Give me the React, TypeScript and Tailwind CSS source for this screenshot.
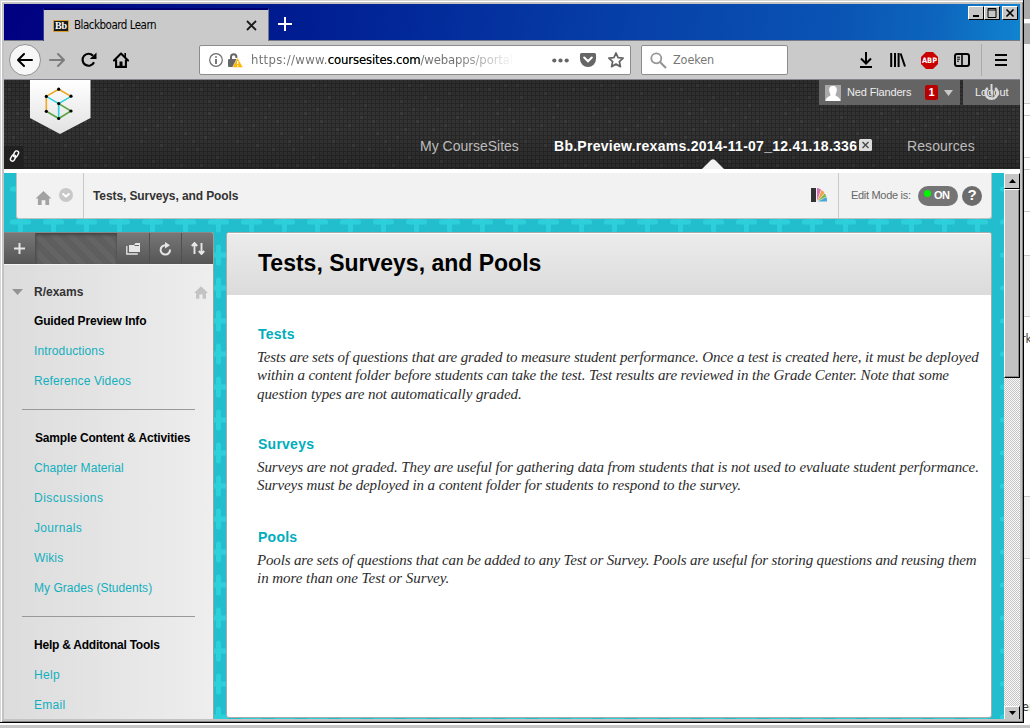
import type { ReactNode } from "react";

const GRID_SPOTS = [
  [4, 8], [20, 4], [36, 16], [48, 28], [12, 32], [28, 40], [56, 44], [8, 56], [40, 60], [60, 12],
  [72, 24], [84, 52], [76, 68], [20, 76], [52, 80], [88, 8], [64, 88], [32, 92], [44, 48], [0, 68],
  [12, 20], [24, 28], [32, 4], [68, 36], [80, 40], [16, 48], [92, 60], [60, 64], [4, 84], [80, 84],
];

function Caption({ className, children }: { className: string; children: ReactNode }) {
  return <span className={"block whitespace-nowrap " + className}>{children}</span>;
}

function HomeGlyph({ className }: { className: string }) {
  return (
    <svg viewBox="0 0 17 15" className={className} fill="currentColor">
      <path d="M8.5 0 17 8h-2.5v7h-4v-5h-4v5h-4V8H0z" />
    </svg>
  );
}

function WinButton({ className, children }: { className: string; children: ReactNode }) {
  return (
    <div className={"flex h-[14px] w-4 items-center justify-center border border-t-white border-l-white border-r-black border-b-black bg-[#c6c6c6] " + className}>
      <svg width="12" height="10" viewBox="0 0 12 10" stroke="#000" fill="none">{children}</svg>
    </div>
  );
}

function TitleBar() {
  return (
    <div className="flex h-[37px] shrink-0 border-b border-[#777b88] bg-[linear-gradient(97deg,#000080_0%,#001c90_28%,#063ca6_58%,#0a54b4_82%,#0d66bd_92%,#1084d0_100%)]">
      <div className="ml-[39px] mt-1 flex h-[33px] w-[226px] items-center border-t-2 border-r border-l border-t-[#000070] border-r-[#777b88] border-l-[#39399a] bg-[#cacaca] pl-[9px]">
        <div className="flex h-3 w-4 items-center justify-center rounded-[1px] border border-[#d99e2b] bg-[#1b1b1b] font-['Liberation_Serif',serif] text-[10px] leading-none font-bold text-white">Bb</div>
        <Caption className="ml-[5px] w-[170px] font-['DejaVu_Sans_Condensed','DejaVu_Sans',sans-serif] text-[11.5px] tracking-[-0.5px] text-black">Blackboard Learn</Caption>
        <svg width="11" height="11" viewBox="0 0 11 11" className="ml-[2px] shrink-0" stroke="#1a1a1a" strokeWidth="1.8"><path d="M1 1l9 9M10 1l-9 9" /></svg>
      </div>
      <svg width="14" height="14" viewBox="0 0 14 14" className="mt-[13px] ml-[9px]" stroke="#fff" strokeWidth="2"><path d="M7 0v14M0 7h14" /></svg>
      <div className="mt-[2px] mr-[2px] ml-auto flex">
        <WinButton className=""><path d="M3 8h6" strokeWidth="2" /></WinButton>
        <WinButton className=""><path d="M2 .5h8v9h-8zM2 2h8" /></WinButton>
        <WinButton className="ml-[2px]"><path d="M2.5 1.5l7 7M9.5 1.5l-7 7" strokeWidth="1.6" /></WinButton>
      </div>
    </div>
  );
}

function Toolbar() {
  return (
    <div className="flex h-[39px] shrink-0 items-center border-b border-[#82848c] bg-[#cacaca]">
      <div className="ml-[5px] flex size-8 shrink-0 items-center justify-center rounded-full border border-[#929292] bg-[#f7f7f7]">
        <svg width="16" height="14" viewBox="0 0 16 14" fill="none" stroke="#000" strokeWidth="2" strokeLinecap="round" strokeLinejoin="round"><path d="M15 7H1M7 1 1 7l6 6" /></svg>
      </div>
      <svg width="16" height="14" viewBox="0 0 16 14" className="ml-2 shrink-0" fill="none" stroke="#7d7d7d" strokeWidth="2" strokeLinecap="round" strokeLinejoin="round"><path d="M1 7h14M9 1l6 6-6 6" /></svg>
      <svg width="16" height="16" viewBox="0 0 16 16" className="ml-4 shrink-0"><path d="M13 10.3A6 6 0 1 1 12 3.7" fill="none" stroke="#000" strokeWidth="2.2" /><path d="M15.5.5v6.6H8.8z" /></svg>
      <svg width="16" height="16" viewBox="0 0 16 16" className="ml-4 shrink-0" fill="none" stroke="#000"><path d="M1 8.5 8 1.5l7 7" strokeWidth="2.1" strokeLinecap="round" strokeLinejoin="round" /><path d="M3.1 7.5v7.4h9.8V7.5" strokeWidth="2.1" /><path d="M8 9.5V15" strokeWidth="3" /><path d="M12.2 1v4" strokeWidth="1.6" /></svg>
      <div className="ml-[70px] flex h-[30px] w-[432px] shrink-0 items-center rounded-[2px] border border-[#8c8c8c] bg-white">
        <svg width="14" height="14" viewBox="0 0 14 14" className="ml-[9px] shrink-0" fill="none" stroke="#6b6b6b"><circle cx="7" cy="7" r="6.3" strokeWidth="1.2" /><path d="M7 6v5M7 3.2v1.6" strokeWidth="1.8" /></svg>
        <svg width="15" height="15" viewBox="0 0 15 15" className="ml-[5px] shrink-0"><path d="M3 7V4a2.700 2.700 0 0 1 5.400 0v1" fill="none" stroke="#666" strokeWidth="2" /><rect x="0" y="6" width="9" height="8" rx="1" fill="#666" /><path d="M9.5 4.5 15 14.5H4.5z" fill="#ffb400" stroke="#fff" strokeWidth=".5" /><path d="M9.7 8v3M9.7 12v1.4" stroke="#fff" strokeWidth="1.3" /></svg>
        <div className="ml-2 w-[266px] overflow-hidden bg-[linear-gradient(90deg,#6f6f6f_205px,#fff_264px)] bg-clip-text font-['DejaVu_Sans_Condensed','DejaVu_Sans',sans-serif] text-[13px] tracking-[-0.15px] whitespace-nowrap text-transparent"><span className="tracking-[0.3px]">https://www.</span><span className="tracking-[-0.15px] text-black">coursesites.com</span>/webapps/portal/</div>
        <svg width="17" height="5" viewBox="0 0 17 5" className="ml-[35px] shrink-0" fill="#666"><circle cx="2.3" cy="2.5" r="2.1" /><circle cx="8.5" cy="2.5" r="2.1" /><circle cx="14.7" cy="2.5" r="2.1" /></svg>
        <svg width="16" height="14" viewBox="0 0 16 14" className="ml-[11px] shrink-0"><path d="M1.5 0h13A1.5 1.5 0 0 1 16 1.5V6a8 8 0 0 1-16 0V1.5A1.5 1.5 0 0 1 1.5 0z" fill="#666" /><path d="m4.2 4.5 3.8 3.7 3.8-3.7" fill="none" stroke="#fff" strokeWidth="2.1" strokeLinecap="round" /></svg>
        <svg width="16" height="16" viewBox="0 0 16 16" className="ml-3 shrink-0" fill="none" stroke="#666" strokeWidth="1.8" strokeLinejoin="round"><path d="m8 1 2.1 4.6 5 .6-3.7 3.4 1 5L8 12.1l-4.4 2.5 1-5L.9 6.2l5-.6z" /></svg>
      </div>
      <div className="ml-[10px] flex h-[30px] w-[147px] shrink-0 items-center rounded-[2px] border border-[#8c8c8c] bg-white">
        <svg width="17" height="17" viewBox="0 0 17 17" className="ml-2 shrink-0" fill="none" stroke="#969696"><circle cx="6.3" cy="6.3" r="5" strokeWidth="1.8" /><path d="m10 10 6 6" strokeWidth="2.2" /></svg>
        <Caption className="ml-[6px] font-['DejaVu_Sans_Condensed','DejaVu_Sans',sans-serif] text-[12.5px] tracking-[-0.1px] text-[#777]">Zoeken</Caption>
      </div>
      <svg width="14" height="16" viewBox="0 0 14 16" className="ml-[71px] shrink-0" fill="none" stroke="#000" strokeWidth="2"><path d="M7 0v11M2 6.5l5 5 5-5M1 15h12" /></svg>
      <svg width="16" height="14" viewBox="0 0 16 14" className="ml-[17px] shrink-0" stroke="#000" strokeWidth="2"><path d="M1.2 0v14M5 0v14M8.6 0v14M10.6.5l4.4 13" /></svg>
      <svg width="17" height="17" viewBox="0 0 17 17" className="ml-[15px] shrink-0"><path d="M5 0h7l5 5v7l-5 5H5l-5-5V5z" fill="#cb0000" /><text x="8.5" y="11.3" textAnchor="middle" fill="#fff" fontFamily="DejaVu Sans Condensed" fontWeight="bold" fontSize="7.4">ABP</text></svg>
      <svg width="16" height="14" viewBox="0 0 16 14" className="ml-4 shrink-0" fill="none" stroke="#000"><rect x="1" y="1" width="14" height="12" rx="2" strokeWidth="2" /><path d="M8 1v12" strokeWidth="1.6" /><path d="M3 4.2h3M3 6.2h3M3 8.2h2" strokeWidth="1" /></svg>
      <div className="ml-[11px] h-8 w-px shrink-0 bg-[#aaa]" />
      <svg width="12" height="12" viewBox="0 0 12 12" className="ml-[13px] shrink-0" stroke="#000" strokeWidth="2"><path d="M0 1h12M0 6h12M0 11h12" /></svg>
    </div>
  );
}

function CourseHeader() {
  return (
    <header className="relative h-[89px] shrink-0 overflow-hidden bg-[#333] font-['Liberation_Sans',sans-serif]">
      <svg className="absolute inset-0 size-full">
        <defs>
          <pattern id="cells" width="4" height="4" patternUnits="userSpaceOnUse"><path d="M0 3.5h4M3.5 0v4" stroke="#272727" /></pattern>
          <pattern id="spots" width="96" height="96" patternUnits="userSpaceOnUse">
            {GRID_SPOTS.map(([x, y]) => <rect key={x + "-" + y} x={x} y={y} width="3" height="3" fill="#3b3b3b" />)}
          </pattern>
          <linearGradient id="shade" x2="0" y2="1"><stop offset="0" stopOpacity="0.12" /><stop offset=".4" stopOpacity="0" /><stop offset=".6" stopOpacity="0" /><stop offset="1" stopOpacity=".18" /></linearGradient>
        </defs>
        <rect width="100%" height="100%" fill="url(#spots)" />
        <rect width="100%" height="100%" fill="url(#cells)" />
        <rect width="100%" height="100%" fill="url(#shade)" />
      </svg>
      <svg width="62" height="56" viewBox="0 0 62 56" className="absolute top-0 left-[26px]">
        <defs><linearGradient id="badge" x2="0" y2="1"><stop stopColor="#fff" /><stop offset="1" stopColor="#e2e2e2" /></linearGradient></defs>
        <path d="M0 0h60.500v38L30 54 0 38z" fill="url(#badge)" />
        <g fill="none" strokeWidth="1.6">
          <path d="M16.300 31V16.400L28.700 9.200 41 16.400" stroke="#f0a820" /><path d="M16.300 16.400l12.400 7.200L41 16.400M28.700 23.600v15" stroke="#2bd0dc" /><path d="M16.300 31.300l12.400 7.200L41 31l-12.300-7.400" stroke="#5aa340" />
        </g>
        {[[28.7, 9.2], [41, 16.2], [16.3, 16.4], [28.7, 23.6], [16.3, 31.3], [41, 31], [28.7, 38.5]].map(([x, y]) => <circle key={x + "-" + y} cx={x} cy={y} r="1.6" fill="#000" />)}
      </svg>
      <div className="absolute bottom-0 left-0 flex h-[23px] w-[19px] items-center justify-center bg-[#202020]">
        <svg width="11" height="12" viewBox="0 0 11 12" className="mb-[4px] ml-px" fill="none" stroke="#fff" strokeWidth="1.400"><rect x="5" y=".8" width="4" height="6.500" rx="2" transform="rotate(30 7 4)" /><rect x="2.100" y="4.800" width="4" height="6.500" rx="2" transform="rotate(30 4.100 8)" /></svg>
      </div>
      <div className="relative flex h-[25px] justify-end gap-[3px] text-[11px] text-[#ededed]">
        <div className="flex w-[141px] items-center bg-[#646464]">
          <svg width="16" height="16" viewBox="0 0 16 16" className="ml-[6px]"><rect width="16" height="16" fill="#aaa" /><path d="M8 1c3 0 4 2 3.800 4.500C11.500 8 10.500 9 10.500 10c0 1.500 4.500 1.500 5 6H.5c.5-4.500 5-4.500 5-6 0-1-1-2-1.300-4.500C4 3 5 1 8 1z" fill="#fff" /></svg>
          <Caption className="ml-[6px] w-[78px] tracking-[-0.15px]">Ned Flanders</Caption>
          <span className="flex h-[15px] w-[13px] items-center justify-center rounded-[2px] bg-[#b90000] font-bold text-white">1</span>
          <svg width="9" height="6" viewBox="0 0 9 6" className="ml-[6px]" fill="#c8c8c8"><path d="M0 0h9L4.500 6z" /></svg>
        </div>
        <div className="relative w-[57px] bg-[#646464]">
          <Caption className="pl-3 leading-[25px]">Logout</Caption>
          <svg width="17" height="17" viewBox="0 0 17 17" className="absolute top-[4px] left-[20px]" fill="none" stroke="#d8d8d8" strokeWidth="2.600"><path d="M4.800 4a6 6 0 1 0 7.400 0" /><path d="M8.500 0v10" strokeWidth="2" /></svg>
        </div>
      </div>
      <nav className="relative mt-8 flex h-[18px] items-center text-sm text-[#bcbcbc]">
        <Caption className="ml-[416px] w-[134px]">My CourseSites</Caption>
        <Caption className="w-[305px] font-bold tracking-[0.27px] text-white">Bb.Preview.rexams.2014-11-07_12.41.18.336</Caption>
        <svg width="13" height="12" viewBox="0 0 13 12" className="mb-[2px]"><rect width="13" height="12" rx="1.500" fill="#ddd" /><path d="m3.500 3 6 6m0-6-6 6" stroke="#444" strokeWidth="1.300" /></svg>
        <Caption className="ml-[35px] tracking-[0.1px]">Resources</Caption>
      </nav>
      <svg width="22" height="10" viewBox="0 0 22 10" className="absolute bottom-0 left-[698px]" fill="#f2f2f2"><path d="M0 10 9 1q2-1.500 4 0l9 9z" /></svg>
    </header>
  );
}

function Breadcrumb() {
  return (
    <div className="ml-3 flex h-[46px] w-[976px] shrink-0 items-center rounded-b-[3px] border-x border-b border-[#bdc2c3] bg-[#f2f2f2] font-['Liberation_Sans',sans-serif]">
      <HomeGlyph className="mt-[5px] ml-[18px] h-[14px] w-[17px] shrink-0 text-[#a2a2a2]" />
      <svg width="14" height="14" viewBox="0 0 14 14" className="mb-px ml-[7px] shrink-0"><circle cx="7" cy="7" r="7" fill="#c8c8c8" /><path d="m3.500 5.500 3.500 3 3.500-3" stroke="#fff" strokeWidth="2" fill="none" /></svg>
      <div className="ml-[10px] h-full w-px bg-[#c9c9c9]" />
      <Caption className="ml-[9px] w-[718px] text-xs font-bold tracking-[-0.1px] text-[#333]">Tests, Surveys, and Pools</Caption>
      <svg width="16" height="14" viewBox="0 0 16 14" className="mb-[2px] shrink-0"><path d="M0 0h5v14H0z" fill="#333" /><path d="M6 13V0q2.500.2 4 1.500z" fill="#d870b4" /><path d="m6.500 13 4-11q2.200 1 3 3z" fill="#f0a24a" /><path d="m7 13 6.800-7.500q1.200 1.500 1.500 3z" fill="#7ab648" /><path d="M7 13.500 15.500 9q.5 2 .5 4.500z" fill="#46a7d6" /></svg>
      <div className="ml-[11px] h-full w-px bg-[#c9c9c9]" />
      <Caption className="ml-[12px] w-[67px] text-[11px] tracking-[-0.3px] text-[#666]">Edit Mode is:</Caption>
      <div className="flex h-5 w-10 shrink-0 items-center rounded-full bg-[#747474] pl-[6px]">
        <span className="mb-[5px] size-[7px] rounded-full bg-[#00f500]" />
        <span className="ml-[3px] text-[11px] font-bold tracking-[-0.5px] text-white">ON</span>
      </div>
      <div className="ml-1 flex size-5 shrink-0 items-center justify-center rounded-full bg-[#6c6c6c] text-[15px] font-bold text-white">?</div>
    </div>
  );
}

function MenuItem({ children, className = "tracking-[0.12px]" }: { children: ReactNode; className?: string }) {
  return <a className={"block h-[30px] pl-[30px] leading-[30px] whitespace-nowrap text-[#12afbe] " + className}>{children}</a>;
}

function MenuHeading({ children, className = "" }: { children: ReactNode; className?: string }) {
  return <h3 className={"h-[30px] pl-[30px] leading-[30px] font-bold whitespace-nowrap text-black " + className}>{children}</h3>;
}

function Sidebar() {
  return (
    <aside className="flex w-[210px] shrink-0 flex-col overflow-hidden rounded-tr-[3px] border-r border-[#9a9fa0] bg-[linear-gradient(90deg,#dcdcdc,#eee)] font-['Liberation_Sans',sans-serif] text-xs">
      <div className="flex h-[33px] shrink-0 border-t border-b border-t-[#888] border-b-[#f5f5f5] bg-[linear-gradient(#777,#555)]">
        <div className="flex w-8 items-center justify-center border-r border-[#505050]"><svg width="11" height="11" viewBox="0 0 11 11" stroke="#e6e6e6" strokeWidth="2"><path d="M5.500 0v11M0 5.500h11" /></svg></div>
        <div className="w-[81px] bg-[repeating-linear-gradient(45deg,#5e5e5e_0_6px,#646464_6px_12px)] shadow-[inset_0_2px_3px_#444]" />
        <div className="flex w-8 items-center justify-center"><svg width="15" height="13" viewBox="0 0 15 13"><path d="M3 3h5l1.500-2H14v9H3z" fill="#e6e6e6" /><path d="M8.500 3.500H13" stroke="#666" /><path d="M.8 4v8h11" fill="none" stroke="#e6e6e6" strokeWidth="1.300" /></svg></div>
        <div className="flex w-8 items-center justify-center border-l border-[#505050]"><svg width="13" height="14" viewBox="0 0 13 14"><path d="M11 7.500A4.700 4.700 0 1 1 6.500 3.200" fill="none" stroke="#e6e6e6" strokeWidth="2" /><path d="M6 0l5 3.200-5 3.300z" fill="#e6e6e6" /></svg></div>
        <div className="flex w-8 items-center justify-center border-l border-[#505050]"><svg width="14" height="13" viewBox="0 0 14 13" fill="none" stroke="#e6e6e6" strokeWidth="1.900"><path d="M3.500 12V1M.8 4l2.700-3 2.700 3M10.500 1v11M7.800 9l2.700 3 2.700-3" /></svg></div>
      </div>
      <div className="mt-[12px] flex h-[30px] shrink-0 items-center">
        <svg width="12" height="6" viewBox="0 0 12 6" className="ml-[8px]" fill="#949494"><path d="M0 0h11L5.500 6z" /></svg>
        <Caption className="ml-[10px] w-[160px] font-bold text-[#333]">R/exams</Caption>
        <HomeGlyph className="h-[13px] w-[14px] text-[#c3c3c3]" />
      </div>
      <MenuHeading className="-mt-px tracking-[-0.16px]">Guided Preview Info</MenuHeading>
      <MenuItem>Introductions</MenuItem>
      <MenuItem>Reference Videos</MenuItem>
      <div className="mt-[13px] mb-[13px] ml-[18px] h-px w-[173px] shrink-0 bg-[#999]" />
      <MenuHeading className="ml-px tracking-[-0.16px]">Sample Content &amp; Activities</MenuHeading>
      <MenuItem className="tracking-[0.07px]">Chapter Material</MenuItem>
      <MenuItem className="tracking-[0.5px]">Discussions</MenuItem>
      <MenuItem className="tracking-[0.33px]">Journals</MenuItem>
      <MenuItem>Wikis</MenuItem>
      <MenuItem className="tracking-[0.04px]">My Grades (Students)</MenuItem>
      <div className="mt-[13px] mb-[13px] ml-[18px] h-px w-[173px] shrink-0 bg-[#999]" />
      <MenuHeading className="tracking-[-0.23px]">Help &amp; Additonal Tools</MenuHeading>
      <MenuItem className="tracking-[0.3px]">Help</MenuItem>
      <MenuItem className="tracking-[0.3px]">Email</MenuItem>
    </aside>
  );
}

function Section({ title, className, children }: { title: string; className: string; children: ReactNode }) {
  return (
    <section className={className}>
      <h2 className="ml-px font-['Liberation_Sans',sans-serif] text-sm leading-5 font-bold tracking-[0.25px] text-[#00adbc]">{title}</h2>
      <div className="mt-1 font-[Georgia,'Liberation_Serif',serif] text-[15px] leading-[18.400px] whitespace-nowrap text-[#2c2c2c] italic">{children}</div>
    </section>
  );
}

function MainPanel() {
  return (
    <main className="ml-[12px] h-[486px] w-[766px] shrink-0 overflow-hidden rounded-[3px] border border-[#a5abac] bg-white">
      <div className="flex h-[62px] items-center border-t border-white bg-[linear-gradient(#ececec,#dbdbdb)]">
        <h1 className="mb-[3px] ml-[31px] font-['Liberation_Sans',sans-serif] text-[23px] font-bold whitespace-nowrap text-black">Tests, Surveys, and Pools</h1>
      </div>
      <div className="pt-[29px] pl-[30px]">
        <Section title="Tests" className="h-[110px]">
          <p className="tracking-[-0.137px]">Tests are sets of questions that are graded to measure student performance. Once a test is created here, it must be deployed</p>
          <p className="tracking-[-0.12px]">within a content folder before students can take the test. Test results are reviewed in the Grade Center. Note that some</p>
          <p className="tracking-[-0.07px]">question types are not automatically graded.</p>
        </Section>
        <Section title="Surveys" className="h-[93px]">
          <p className="tracking-[-0.09px]">Surveys are not graded. They are useful for gathering data from students that is not used to evaluate student performance.</p>
          <p className="tracking-[-0.11px]">Surveys must be deployed in a content folder for students to respond to the survey.</p>
        </Section>
        <Section title="Pools" className="">
          <p className="tracking-[-0.157px]">Pools are sets of questions that can be added to any Test or Survey. Pools are useful for storing questions and reusing them</p>
          <p className="tracking-[-0.04px]">in more than one Test or Survey.</p>
        </Section>
      </div>
    </main>
  );
}

function ScrollBar() {
  return (
    <div className="flex w-4 shrink-0 flex-col bg-[repeating-conic-gradient(#c6c6c6_0_25%,#f8f8f8_0_50%)] bg-[length:2px_2px]">
      <div className="flex h-4 shrink-0 items-center justify-center border border-t-white border-r-black border-b-black border-l-white bg-[#c6c6c6]"><svg width="7" height="4" viewBox="0 0 7 4"><path d="M3.500 0 7 4H0z" /></svg></div>
      <div className="h-[189px] shrink-0 border border-t-white border-r-black border-b-black border-l-white bg-[#c2c2c2] shadow-[inset_-1px_-1px_#888]" />
      <div className="mt-auto flex h-[13px] shrink-0 items-center justify-center border border-b-0 border-t-white border-r-black border-l-white bg-[#c6c6c6]"><svg width="7" height="4" viewBox="0 0 7 4"><path d="M0 0h7L3.500 4z" /></svg></div>
    </div>
  );
}

export default function App() {
  return (
    <div className="flex h-[728px] w-[1030px] flex-col overflow-hidden bg-white">
      <div className="flex h-[723px] shrink-0">
        <div className="flex h-[723px] w-[1024px] shrink-0 flex-col border-r border-b border-black bg-[#c3c3c3]">
          <div className="flex h-[722px] flex-col border-t border-l border-[#d6d6d6]">
            <div className="flex h-[721px] flex-col border-t border-l border-white pt-[2px] pr-[3px] pb-[3px] pl-[2px] shadow-[inset_-1px_-1px_#858585]">
              <TitleBar />
              <Toolbar />
              <CourseHeader />
              <div className="h-1 shrink-0 bg-white" />
              <div className="flex min-h-0 flex-1">
                <div className="relative w-[1000px] shrink-0 overflow-hidden bg-[#23becd]">
                  <svg className="absolute inset-0 size-full">
                    <defs><pattern id="plus" x="0" y="32" width="33" height="33" patternUnits="userSpaceOnUse"><path d="M16.500 9v16M8.500 17h16" stroke="#2ccfda" strokeWidth="5" strokeLinecap="round" /></pattern></defs>
                    <rect width="100%" height="100%" fill="url(#plus)" />
                  </svg>
                  <div className="relative flex h-full flex-col">
                    <Breadcrumb />
                    <div className="mt-[13px] flex min-h-0 flex-1">
                      <Sidebar />
                      <MainPanel />
                    </div>
                  </div>
                </div>
                <ScrollBar />
              </div>
            </div>
          </div>
        </div>
        <div className="flex w-[6px] shrink-0 flex-col overflow-hidden bg-white font-['DejaVu_Sans_Condensed',sans-serif] text-[12.500px] text-[#444]">
          <div className="h-[19px] shrink-0 bg-[#aaa]" />
          <div className="mt-1 h-[21px] shrink-0 border-t border-[#c5c5c5] bg-[#aaa]" />
          <div className="h-[60px] shrink-0 border-b border-[#ccc] bg-[#f3f3f3]" />
          <div className="h-3 shrink-0 border-b border-[#ccc]" />
          <div className="h-[42px] shrink-0 border-b border-[#ccc]" />
          <div className="h-3 shrink-0 border-b border-[#ccc]" />
          <div className="h-[42px] shrink-0 border-b border-[#ccc]" />
          <div className="h-11 shrink-0 border-b border-[#ccc]" />
          <div className="h-[61px] shrink-0 border-b border-[#ccc] bg-[#f3f3f3]" />
          <div className="-ml-[3px] h-[180px] shrink-0 border-b border-[#ccc] pt-[13px]">rk</div>
          <div className="h-[62px] shrink-0 border-b border-[#ccc] bg-[#f3f3f3]" />
          <div className="-ml-[2px] pt-[139px]">er</div>
        </div>
      </div>
      <div className="mt-[2px] h-[3px] w-full bg-[#c6c6c6]" />
    </div>
  );
}
